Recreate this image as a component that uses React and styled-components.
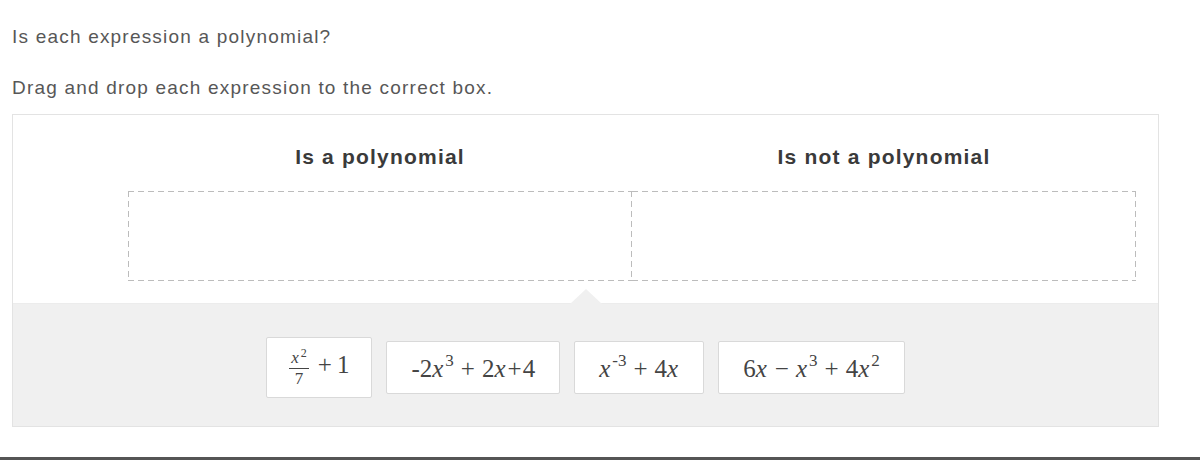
import styled, { createGlobalStyle } from "styled-components";

const GlobalStyle = createGlobalStyle`
	html, body {
		margin: 0;
		padding: 0;
		background: #fff;
	}
	body {
		font-family: "Liberation Sans", Arial, sans-serif;
		color: #555;
	}
`;

const Page = styled.div`
	width: 1200px;
	height: 460px;
	overflow: hidden;
	display: flex;
	flex-direction: column;
`;

const Content = styled.div`
	padding: 27px 0 0 12px;
`;

const Prompt = styled.p`
	margin: 0 0 ${(p) => p.$gap || 0}px;
	font-size: 19px;
	line-height: 20px;
	letter-spacing: 1.2px;
	color: #575757;
`;

const Board = styled.div`
	width: 1145px;
	border: 1px solid #e3e3e3;
	background: #fff;
`;

const Targets = styled.div`
	display: grid;
	grid-template-columns: 1fr 1fr;
	padding: 30px 22px 22px 115px;
	background: #fff;
`;

const Heading = styled.h3`
	margin: 0 0 22px;
	text-align: center;
	font-size: 21px;
	line-height: 24px;
	font-weight: bold;
	letter-spacing: 1.2px;
	color: #3a3a3a;
`;

const dashH = "repeating-linear-gradient(90deg, #bcbcbc 0 6px, transparent 6px 10px)";
const dashV = "repeating-linear-gradient(180deg, #bcbcbc 0 6px, transparent 6px 10px)";

const Drop = styled.div`
	height: 90px;
	background-image: ${dashH}, ${dashH}, ${dashV}, ${dashV};
	background-size: 100% 1px, 100% 1px, 1px 100%, ${(p) => (p.$joined ? "0 0" : "1px 100%")};
	background-position: left top, left bottom, right top, left top;
	background-repeat: no-repeat;
`;

const Tray = styled.div`
	position: relative;
	display: flex;
	justify-content: center;
	align-items: center;
	gap: 14px;
	padding: 33px 0 28px;
	background: #f0f0f0;
	border-top: 1px solid #ececec;

	&::before {
		content: "";
		position: absolute;
		top: -15px;
		left: 50%;
		margin-left: -16px;
		border-left: 16px solid transparent;
		border-right: 16px solid transparent;
		border-bottom: 15px solid #f0f0f0;
	}
`;

const Card = styled.div`
	display: flex;
	align-items: center;
	min-height: 51px;
	padding: ${(p) => (p.$tall ? "4px 22px" : "0 24px")};
	background: #fff;
	border: 1px solid #d9d9d9;
	border-radius: 2px;
	font-family: "Liberation Serif", "Times New Roman", serif;
	font-size: 25px;
	color: #444;
	white-space: nowrap;
`;

const Math = styled.span`
	display: inline-block;
	line-height: 30px;
`;

const V = styled.i`
	font-style: italic;
	padding-right: 1px;
`;

const Sup = styled.span`
	display: inline-block;
	font-size: ${(p) => p.$size || 17}px;
	line-height: 1;
	vertical-align: ${(p) => p.$lift || 11}px;
	margin-left: 1px;
`;

const Op = styled.span`
	margin: 0 ${(p) => p.$space ?? 7}px;
`;

const Frac = styled.span`
	display: inline-flex;
	flex-direction: column;
	align-items: center;
	vertical-align: middle;
	font-size: 17px;
	line-height: 19px;
	margin-right: 4px;
`;

const Num = styled.span`
	padding: 0 2px 1px;
	border-bottom: 1px solid #444;
`;

const Rule = styled.div`
	margin-top: auto;
	height: 3px;
	background: #555;
`;

export default function App() {
	return (
		<Page>
			<GlobalStyle />
			<Content>
				<Prompt $gap={31}>Is each expression a polynomial?</Prompt>
				<Prompt $gap={16}>Drag and drop each expression to the correct box.</Prompt>
				<Board>
					<Targets>
						<Heading>Is a polynomial</Heading>
						<Heading>Is not a polynomial</Heading>
						<Drop />
						<Drop $joined />
					</Targets>
					<Tray>
						<Card $tall>
							<Math>
								<Frac>
									<Num>
										<V>x</V>
										<Sup $size={12} $lift={6}>2</Sup>
									</Num>
									<span>7</span>
								</Frac>
								<Op $space={5}>+</Op>1
							</Math>
						</Card>
						<Card>
							<Math>
								-2<V>x</V>
								<Sup>3</Sup>
								<Op>+</Op>2<V>x</V>
								<Op $space={1}>+</Op>4
							</Math>
						</Card>
						<Card>
							<Math>
								<V>x</V>
								<Sup>-3</Sup>
								<Op>+</Op>4<V>x</V>
							</Math>
						</Card>
						<Card>
							<Math>
								6<V>x</V>
								<Op>−</Op>
								<V>x</V>
								<Sup>3</Sup>
								<Op>+</Op>4<V>x</V>
								<Sup>2</Sup>
							</Math>
						</Card>
					</Tray>
				</Board>
			</Content>
			<Rule />
		</Page>
	);
}
